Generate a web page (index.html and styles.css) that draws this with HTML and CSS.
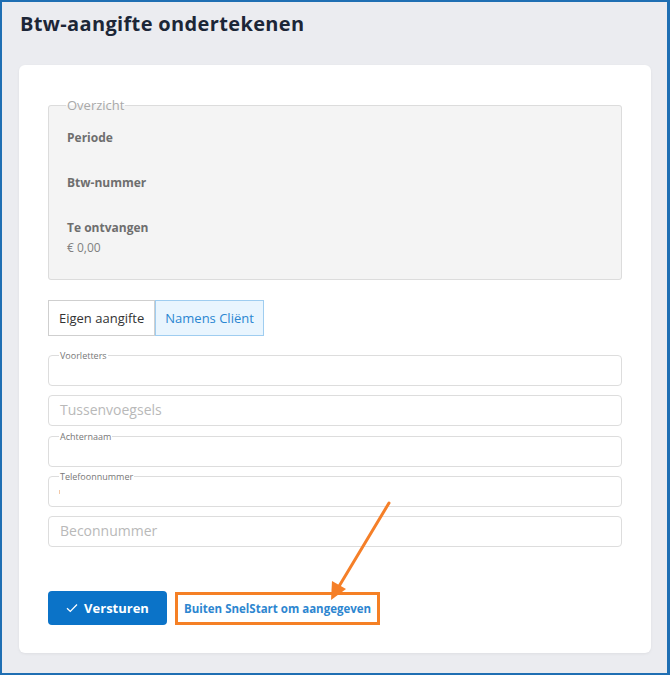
FILE: index.html
```html
<!doctype html>
<html lang="nl">
<head>
    <meta charset="UTF-8">
    <title>Btw-aangifte ondertekenen</title>
    <link rel="stylesheet" href="styles.css">
</head>
<body>
<div class="frame">
    <h1 class="title">Btw-aangifte ondertekenen</h1>

    <div class="card">
        <!--overzicht-->
        <fieldset class="summary">
            <legend>Overzicht</legend>
            <div class="item">
                <div class="item-label">Periode</div>
                <div class="item-value"></div>
            </div>
            <div class="item">
                <div class="item-label">Btw-nummer</div>
                <div class="item-value"></div>
            </div>
            <div class="item">
                <div class="item-label">Te ontvangen</div>
                <div class="item-value">€ 0,00</div>
            </div>
        </fieldset>

        <div class="toggle">
            <div class="toggle-btn">Eigen aangifte</div>
            <div class="toggle-btn active">Namens Cliënt</div>
        </div>

        <!--velden-->
        <div class="fields">
            <div class="field"><span class="float-label">Voorletters</span></div>
            <div class="field"><span class="placeholder">Tussenvoegsels</span></div>
            <div class="field"><span class="float-label">Achternaam</span></div>
            <div class="field"><span class="float-label">Telefoonnummer</span><span class="caret"></span></div>
            <div class="field"><span class="placeholder">Beconnummer</span></div>
        </div>

        <div class="actions">
            <div class="btn-send">
                <svg width="12" height="10" viewBox="0 0 12 10"><path d="M1 5.2 L4.3 8.4 L11 1.5" fill="none" stroke="#fff" stroke-width="1.3"/></svg>
                Versturen
            </div>
            <div class="highlight">
                <span class="link">Buiten SnelStart om aangegeven</span>
            </div>
        </div>
    </div>

    <svg class="arrow" width="670" height="675" viewBox="0 0 670 675">
        <line x1="389" y1="503" x2="338" y2="588" stroke="#f57f28" stroke-width="3" stroke-linecap="round"/>
        <polygon points="331,600 346,589 332,581" fill="#f57f28"/>
    </svg>
</div>
</body>
</html>
```

FILE: styles.css
```css
*{
    padding: 0;
    margin: 0;
    box-sizing: border-box;
}
body{
    font-family: "Open Sans", "Liberation Sans", sans-serif;
    background: #ebecf0;
}
.frame{
    position: relative;
    width: 670px;
    height: 675px;
    border: 2px solid #1f6fb3;
    border-right-width: 3px;
    background: #ebecf0;
    padding: 0 0 0 17px;
}
.title{
    font-size: 20px;
    font-weight: 700;
    color: #1c2637;
    line-height: 28px;
    padding: 8px 0 0 1px;
    height: 63px;
    letter-spacing: 0.35px;
}
.card{
    width: 632px;
    height: 588px;
    background: #fff;
    border-radius: 6px;
    box-shadow: 0 1px 3px rgba(0,0,0,0.06);
    padding: 32px 29px 0;
}
.summary{
    border: 1.5px solid #dcdcdc;
    border-radius: 3px;
    background: #f4f4f4;
    padding: 15px 18px 21px;
    height: 183px;
}
.summary legend{
    font-size: 13px;
    color: #a9a9a9;
    padding: 0 1px;
    margin-left: -1px;
    line-height: 16px;
}
.item{
    margin-bottom: 5px;
}
.item-label{
    font-size: 12px;
    font-weight: 700;
    color: #6e6e6e;
    line-height: 20px;
}
.item-value{
    font-size: 12px;
    color: #808080;
    line-height: 20px;
    min-height: 20px;
}
.toggle{
    display: flex;
    margin-top: 20px;
}
.toggle-btn{
    height: 36px;
    line-height: 34px;
    padding: 0 10px;
    font-size: 13px;
    color: #333;
    border: 1px solid #cfcfcf;
}
.toggle-btn.active{
    padding: 0 9px;
    color: #2a86d1;
    background: #e9f5fe;
    border-color: #9fcdf0;
}
.fields{
    display: flex;
    flex-direction: column;
    gap: 9.3px;
    margin-top: 19px;
}
.field{
    position: relative;
    height: 31px;
    border: 1.5px solid #dddddd;
    border-radius: 4px;
    padding-left: 11px;
}
.placeholder{
    font-size: 14px;
    color: #b9b9b9;
    line-height: 28px;
}
.float-label{
    position: absolute;
    left: 10px;
    top: -5px;
    font-size: 9px;
    line-height: 10px;
    color: #777;
    background: #fff;
    padding: 0 1px;
}
.caret{
    position: absolute;
    left: 10px;
    top: 13px;
    width: 1px;
    height: 4px;
    background: #f3c9a8;
}
.actions{
    display: flex;
    align-items: center;
    gap: 8px;
    margin-top: 44px;
}
.btn-send{
    width: 119px;
    height: 34px;
    background: #0b73c8;
    border-radius: 4px;
    color: #fff;
    font-size: 13px;
    font-weight: 700;
    display: flex;
    align-items: center;
    justify-content: center;
    gap: 6px;
}
.highlight{
    height: 33px;
    border: 3px solid #f58025;
    padding: 0 6px;
    display: flex;
    align-items: center;
}
.link{
    font-size: 11.5px;
    font-weight: 700;
    color: #2d86d0;
}
.arrow{
    position: absolute;
    left: -2px;
    top: -2px;
    pointer-events: none;
}
```
